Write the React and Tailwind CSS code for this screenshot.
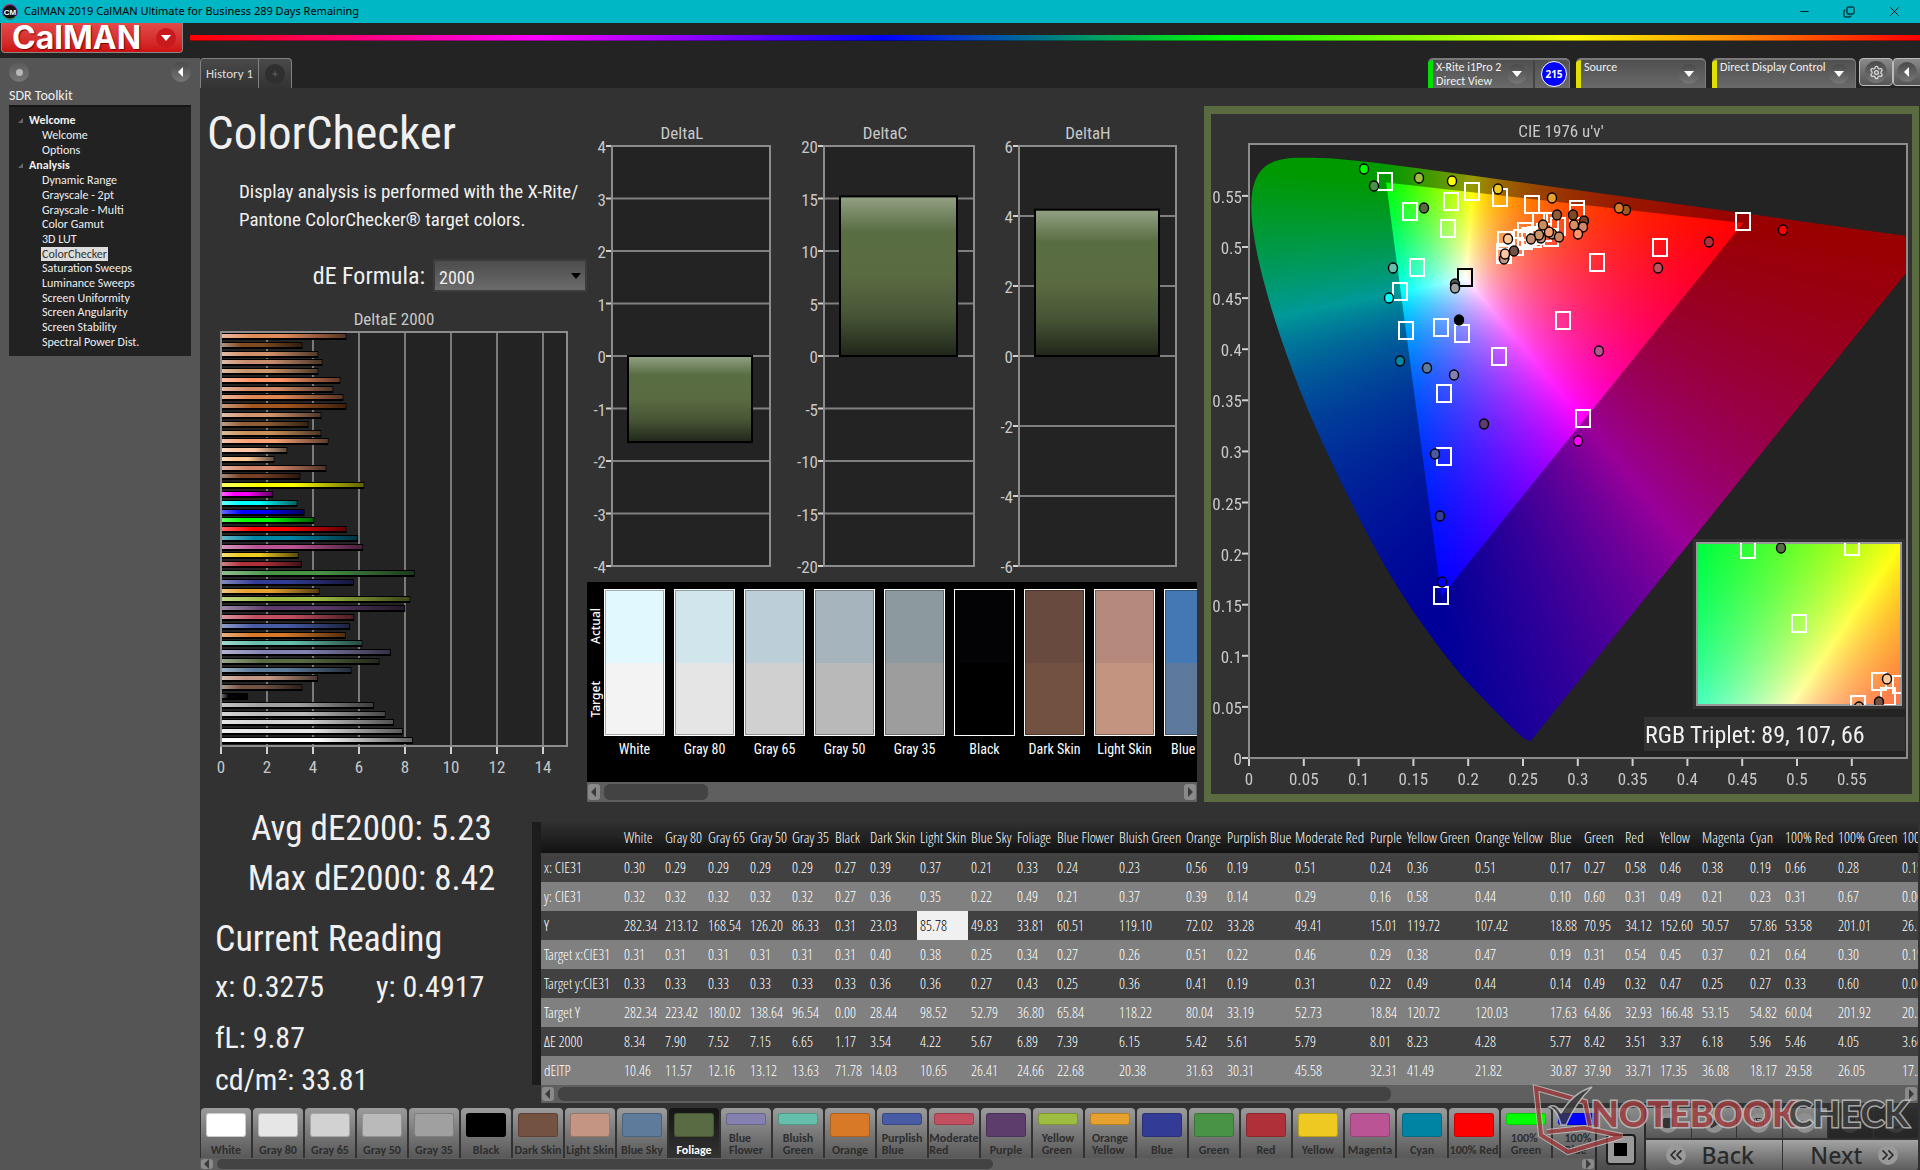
import React, { useEffect, useRef } from 'react';
import { Minus, Copy, X, Settings, ChevronsLeft, ChevronsRight, Square, Play, Save, Infinity as Loop, RefreshCw, Circle, Plus } from 'lucide-react';

const THIN = "font-['Open_Sans_Condensed_Light','Roboto_Condensed',sans-serif]";
const COND = "font-['Roboto_Condensed','Carlito',sans-serif]";
const COND_STACK = "'Roboto Condensed','Carlito',sans-serif";

const tree = [
  { title: 'Welcome', items: ['Welcome', 'Options'] },
  {
    title: 'Analysis',
    items: [
      'Dynamic Range', 'Grayscale - 2pt', 'Grayscale - Multi', 'Color Gamut', '3D LUT', 'ColorChecker',
      'Saturation Sweeps', 'Luminance Sweeps', 'Screen Uniformity', 'Screen Angularity', 'Screen Stability',
      'Spectral Power Dist.',
    ],
  },
];

const deltaE = [
  [5.45, '#e08a57'], [3.54, '#7e4a22'], [4.23, '#cf8f68'], [4.41, '#c68c6c'], [4.23, '#c9946a'], [5.19, '#ff9466'],
  [4.88, '#d38a66'], [5.32, '#e08655'], [5.45, '#a35620'], [4.36, '#d0936e'], [3.8, '#8f5c34'], [4.36, '#c88f5a'],
  [4.67, '#f7a274'], [2.88, '#fcc6a4'], [2.32, '#ffc898'], [4.58, '#d3866a'], [3.45, '#743f24'], [6.23, '#ffff00'],
  [2.27, '#ff00ff'], [3.32, '#00ffff'], [3.63, '#0000ff'], [4.05, '#00ff00'], [5.46, '#ff0000'], [5.96, '#0084a4'],
  [6.18, '#bb5494'], [3.37, '#edc921'], [3.51, '#b03039'], [8.42, '#489446'], [5.77, '#323c96'], [4.28, '#e6a12e'],
  [8.23, '#9dbc40'], [8.01, '#5c3d6c'], [5.79, '#c35060'], [5.61, '#485ba5'], [5.42, '#d87928'], [6.15, '#65bfab'],
  [7.39, '#8480b0'], [6.89, '#596b42'], [5.67, '#5e7b9c'], [4.22, '#c39582'], [3.54, '#745242'], [1.17, '#040404'],
  [6.65, '#a0a0a0'], [7.15, '#bababa'], [7.52, '#d2d2d2'], [7.9, '#e6e6e6'], [8.34, '#ffffff'],
];

const strip = [
  ['White', '#e2f8ff', '#f3f3f3'], ['Gray 80', '#d1e6ec', '#e5e5e5'], ['Gray 65', '#bccfd9', '#d0d0d0'],
  ['Gray 50', '#a6b4be', '#b9b9b9'], ['Gray 35', '#8c999f', '#9d9d9d'], ['Black', '#030305', '#000000'],
  ['Dark Skin', '#684a3e', '#735141'], ['Light Skin', '#b6897d', '#c39480'], ['Blue Sky', '#4378b4', '#5d7a9d'],
];

const columns = [
  ['White', 41, '0.30 0.32 282.34 0.31 0.33 282.34 8.34 10.46'],
  ['Gray 80', 43, '0.29 0.32 213.12 0.31 0.33 223.42 7.90 11.57'],
  ['Gray 65', 42, '0.29 0.32 168.54 0.31 0.33 180.02 7.52 12.16'],
  ['Gray 50', 42, '0.29 0.32 126.20 0.31 0.33 138.64 7.15 13.12'],
  ['Gray 35', 43, '0.29 0.32 86.33 0.31 0.33 96.54 6.65 13.63'],
  ['Black', 35, '0.27 0.27 0.31 0.31 0.33 0.00 1.17 71.78'],
  ['Dark Skin', 50, '0.39 0.36 23.03 0.40 0.36 28.44 3.54 14.03'],
  ['Light Skin', 51, '0.37 0.35 85.78 0.38 0.36 98.52 4.22 10.65'],
  ['Blue Sky', 46, '0.21 0.22 49.83 0.25 0.27 52.79 5.67 26.41'],
  ['Foliage', 40, '0.33 0.49 33.81 0.34 0.43 36.80 6.89 24.66'],
  ['Blue Flower', 62, '0.24 0.21 60.51 0.27 0.25 65.84 7.39 22.68'],
  ['Bluish Green', 67, '0.23 0.37 119.10 0.26 0.36 118.22 6.15 20.38'],
  ['Orange', 41, '0.56 0.39 72.02 0.51 0.41 80.04 5.42 31.63'],
  ['Purplish Blue', 68, '0.19 0.14 33.28 0.22 0.19 33.19 5.61 30.31'],
  ['Moderate Red', 75, '0.51 0.29 49.41 0.46 0.31 52.73 5.79 45.58'],
  ['Purple', 37, '0.24 0.16 15.01 0.29 0.22 18.84 8.01 32.31'],
  ['Yellow Green', 68, '0.36 0.58 119.72 0.38 0.49 120.72 8.23 41.49'],
  ['Orange Yellow', 75, '0.51 0.44 107.42 0.47 0.44 120.03 4.28 21.82'],
  ['Blue', 34, '0.17 0.10 18.88 0.19 0.14 17.63 5.77 30.87'],
  ['Green', 41, '0.27 0.60 70.95 0.31 0.49 64.86 8.42 37.90'],
  ['Red', 35, '0.58 0.31 34.12 0.54 0.32 32.93 3.51 33.71'],
  ['Yellow', 42, '0.46 0.49 152.60 0.45 0.47 166.48 3.37 17.35'],
  ['Magenta', 48, '0.38 0.21 50.57 0.37 0.25 53.15 6.18 36.08'],
  ['Cyan', 35, '0.19 0.23 57.86 0.21 0.27 54.82 5.96 18.17'],
  ['100% Red', 53, '0.66 0.31 53.58 0.64 0.33 60.04 5.46 29.58'],
  ['100% Green', 64, '0.28 0.67 201.01 0.30 0.60 201.92 4.05 26.05'],
  ['100% Blue', 58, '0.15 0.06 26.10 0.15 0.06 20.32 3.60 17.20'],
].map(([name, width, values]) => ({ name, width, values: values.split(' ') }));
const rowNames = ['x: CIE31', 'y: CIE31', 'Y', 'Target x:CIE31', 'Target y:CIE31', 'Target Y', 'ΔE 2000', 'dEITP'];

const patches = [
  ['White', '#ffffff'], ['Gray 80', '#e6e6e6'], ['Gray 65', '#d2d2d2'], ['Gray 50', '#bababa'], ['Gray 35', '#a0a0a0'],
  ['Black', '#000000'], ['Dark Skin', '#745242'], ['Light Skin', '#c39582'], ['Blue Sky', '#5e7b9c'], ['Foliage', '#596b42'],
  ['Blue Flower', '#8480b0', 1], ['Bluish Green', '#65bfab', 1], ['Orange', '#d87928'], ['Purplish Blue', '#485ba5', 1],
  ['Moderate Red', '#c35060', 1], ['Purple', '#5c3d6c'], ['Yellow Green', '#9dbc40', 1], ['Orange Yellow', '#e6a12e', 1],
  ['Blue', '#323c96'], ['Green', '#489446'], ['Red', '#b03039'], ['Yellow', '#edc921'], ['Magenta', '#bb5494'],
  ['Cyan', '#0084a4'], ['100% Red', '#ff0000'], ['100% Green', '#00ff00', 1], ['100% Blue', '#0000ff', 1],
];

/* Marker positions are in plot units: 658 x 614 covers u' and v' from 0 to 0.6. */
const targets = [
  [136, 37], [223, 47], [251, 53], [283, 60], [202, 57], [161, 67], [199, 84], [168, 123], [151, 147], [157, 186],
  [192, 183], [213, 189], [250, 212], [314, 176], [348, 118], [411, 103], [494, 77], [334, 274], [195, 249], [195, 312],
  [328, 65], [328, 69], [309, 82], [291, 77], [302, 77], [276, 87], [256, 96], [255, 108], [272, 94], [276, 96],
  [280, 92], [286, 91], [267, 102], [302, 93], [285, 94], [295, 88], [255, 110], [192, 451],
];
const readings = [
  [115, 25, '#00ff00'], [125, 42, '#489446'], [170, 34, '#9dbc40'], [203, 37, '#ffff00'], [249, 45, '#edc921'],
  [303, 54, '#e6a12e'], [175, 64, '#596b42'], [377, 66, '#a35620'], [370, 64, '#d87928'], [460, 98, '#b03039'],
  [534, 86, '#ff0000'], [409, 124, '#c35060'], [350, 207, '#bb5494'], [329, 297, '#ff00ff'], [235, 280, '#5c3d6c'],
  [186, 310, '#485ba5'], [178, 224, '#5e7b9c'], [205, 231, '#8480b0'], [151, 217, '#0084a4'], [140, 154, '#00ffff'],
  [144, 124, '#65bfab'], [206, 140, '#555555'], [206, 144, '#a0a0a0'], [210, 176, '#000000'], [191, 372, '#323c96'],
  [193, 438, '#0000ff'], [308, 71, '#8f5c34'], [324, 71, '#7e4a22'], [335, 77, '#743f24'], [334, 83, '#d3866a'],
  [325, 81, '#d88e68'], [329, 90, '#ff9466'], [303, 90, '#c68c6c'], [292, 94, '#c39582'], [310, 93, '#c88860'],
  [300, 88, '#f7a274'], [294, 81, '#c88f5a'], [290, 91, '#c9946a'], [282, 95, '#c68c6c'], [259, 95, '#ffc898'],
  [265, 107, '#745242'], [255, 115, '#c39582'], [256, 110, '#fcc6a4'],
];

const locusXY = [
  [0.1741, 0.005], [0.1714, 0.0051], [0.1644, 0.0109], [0.1566, 0.0177], [0.144, 0.0297], [0.1241, 0.0578],
  [0.1096, 0.0868], [0.0913, 0.1327], [0.0687, 0.2007], [0.0454, 0.295], [0.0235, 0.4127], [0.0082, 0.5384],
  [0.0039, 0.6548], [0.0139, 0.7502], [0.0389, 0.812], [0.0743, 0.8338], [0.1142, 0.8262], [0.1547, 0.8059],
  [0.1929, 0.7816], [0.2296, 0.7543], [0.3016, 0.6923], [0.3731, 0.6245], [0.4441, 0.5547], [0.5125, 0.4866],
  [0.5752, 0.4242], [0.627, 0.3725], [0.6658, 0.334], [0.6915, 0.3083], [0.719, 0.2809], [0.7347, 0.2653],
];

function chromaticityRGB(x, y) {
  const X = x / y;
  const Z = (1 - x - y) / y;
  const lin = [
    3.2406 * X - 1.5372 - 0.4986 * Z,
    -0.9689 * X + 1.8758 + 0.0415 * Z,
    0.0557 * X - 0.204 + 1.057 * Z,
  ].map((c) => Math.max(c, 0));
  const max = Math.max(...lin, 1e-6);
  return lin.map((c) => (255 * c) / max);
}

function field(width, height, toXY, level) {
  const canvas = document.createElement('canvas');
  canvas.width = width;
  canvas.height = height;
  const ctx = canvas.getContext('2d');
  const image = ctx.createImageData(width, height);
  for (let j = 0; j < height; j += 1) {
    for (let i = 0; i < width; i += 1) {
      const [x, y] = toXY(i + 0.5, j + 0.5);
      const rgb = chromaticityRGB(x, Math.max(y, 1e-4));
      const k = (j * width + i) * 4;
      image.data[k] = rgb[0] * level;
      image.data[k + 1] = rgb[1] * level;
      image.data[k + 2] = rgb[2] * level;
      image.data[k + 3] = 255;
    }
  }
  ctx.putImageData(image, 0, 0);
  return canvas;
}

const PLOT = { x: 38, y: 30, w: 658, h: 614 };
const INSET = { x: 486, y: 429, w: 204, h: 162 };

function ChromaticityCanvas() {
  const ref = useRef(null);
  useEffect(() => {
    const ctx = ref.current.getContext('2d');
    const px = (u) => PLOT.x + (u / 0.6) * PLOT.w;
    const py = (v) => PLOT.y + PLOT.h - (v / 0.6) * PLOT.h;
    const toXY = (i, j) => {
      const u = (i / PLOT.w) * 0.6;
      const v = 0.6 - (j / PLOT.h) * 0.6;
      const d = 6 * u - 16 * v + 12;
      return [(9 * u) / d, (4 * v) / d];
    };
    ctx.fillStyle = '#323232';
    ctx.fillRect(0, 0, 701, 680);
    ctx.fillStyle = '#232323';
    ctx.fillRect(PLOT.x, PLOT.y, PLOT.w, PLOT.h);

    const locus = locusXY.map(([x, y]) => {
      const d = -2 * x + 12 * y + 3;
      return [px((4 * x) / d), py((9 * y) / d)];
    });
    ctx.save();
    ctx.beginPath();
    ctx.rect(PLOT.x, PLOT.y, PLOT.w, PLOT.h);
    ctx.clip();
    ctx.beginPath();
    ctx.moveTo(locus[0][0], locus[0][1]);
    for (let n = 1; n < locus.length - 1; n += 1) {
      const [ax, ay] = locus[n];
      const [bx, by] = locus[n + 1];
      ctx.quadraticCurveTo(ax, ay, (ax + bx) / 2, (ay + by) / 2);
    }
    ctx.lineTo(...locus[locus.length - 1]);
    ctx.closePath();
    ctx.clip();
    ctx.drawImage(field(PLOT.w, PLOT.h, toXY, 0.6), PLOT.x, PLOT.y);
    ctx.beginPath();
    ctx.moveTo(px(0.4507), py(0.5229));
    ctx.lineTo(px(0.125), py(0.5625));
    ctx.lineTo(px(0.1754), py(0.1579));
    ctx.closePath();
    ctx.clip();
    ctx.drawImage(field(PLOT.w, PLOT.h, toXY, 1), PLOT.x, PLOT.y);
    ctx.restore();

    ctx.fillStyle = '#323232';
    ctx.fillRect(482, 425, 212, 170);
    ctx.fillRect(433, 603, 261, 34);
    const insetXY = (i, j) => [0.34 + (i - INSET.w / 2) / 1400, 0.43 - (j - INSET.h / 2) / 1240];
    ctx.drawImage(field(INSET.w, INSET.h, insetXY, 1), INSET.x, INSET.y);
  }, []);
  return <canvas ref={ref} width={701} height={680} className="block h-auto w-full" />;
}

function Target({ x, y, color = '#ffffff' }) {
  return <rect x={x - 7} y={y - 8} width="14" height="17" fill="none" stroke={color} strokeWidth="2" />;
}
function Reading({ x, y, color }) {
  return <ellipse cx={x} cy={y} rx="4.5" ry="5" fill={color} stroke="#000000" strokeWidth="1.4" />;
}

function CieChart() {
  const ticks = [0, 0.05, 0.1, 0.15, 0.2, 0.25, 0.3, 0.35, 0.4, 0.45, 0.5, 0.55];
  return (
    <section className="relative border-x-[7px] border-y-8 border-[#5a6b42]">
      <ChromaticityCanvas />
      <svg viewBox="0 0 701 680" className="absolute inset-0 h-full w-full" fontFamily={COND_STACK} fontSize="17" fill="#c8c8c8">
        <text x="350" y="23" textAnchor="middle" fontSize="17">CIE 1976 u'v'</text>
        <rect x={PLOT.x} y={PLOT.y} width={PLOT.w} height={PLOT.h} fill="none" stroke="#8c8c8c" strokeWidth="2" />
        {ticks.map((t) => (
          <g key={t}>
            <line x1={PLOT.x + t * 1096} x2={PLOT.x + t * 1096} y1="645" y2="652" stroke="#d0d0d0" strokeWidth="2" />
            <text x={PLOT.x + t * 1096} y="671" textAnchor="middle">{t}</text>
            <line x1="31" x2="37" y1={644 - t * 1022} y2={644 - t * 1022} stroke="#d0d0d0" strokeWidth="2" />
            <text x="31" y={651 - t * 1022} textAnchor="end">{t}</text>
          </g>
        ))}
        <g transform={`translate(${PLOT.x} ${PLOT.y})`}>
          {targets.map(([x, y], n) => <Target key={n} x={x} y={y} />)}
          <Target x={216} y={133} color="#000000" />
          {readings.map(([x, y, c], n) => <Reading key={n} x={x} y={y} color={c} />)}
        </g>
        <clipPath id="inset-clip"><rect x={INSET.x} y={INSET.y} width={INSET.w} height={INSET.h} /></clipPath>
        <rect x={INSET.x} y={INSET.y} width={INSET.w} height={INSET.h} fill="none" stroke="#9a9a9a" strokeWidth="2" />
        <g clipPath="url(#inset-clip)">
          <Target x={537} y={435} />
          <Target x={641} y={432} />
          <Target x={588} y={509} />
          <Target x={668} y={567} />
          <Target x={689} y={570} />
          <Target x={677} y={582} />
          <Target x={647} y={590} />
          <Reading x={570} y={434} color="#596b42" />
          <Reading x={676} y={565} color="#ffc898" />
          <Reading x={668} y={588} color="#745242" />
          <Reading x={648} y={593} color="#c39582" />
        </g>
        <text x="434" y="629" fontSize="24" fill="#f0f0f0">RGB Triplet: 89, 107, 66</text>
      </svg>
    </section>
  );
}

function DeltaChart({ title, titleX, width, left, right, bar, max, step, value }) {
  const scale = 210 / max;
  const ticks = [];
  for (let t = max; t >= -max; t -= step) ticks.push(t);
  const top = value > 0 ? 236 - value * scale : 236;
  return (
    <svg viewBox={`0 0 ${width} 460`} width={width} height="460" fontFamily={COND_STACK} fontSize="17" fill="#c8c8c8">
      <defs>
        <linearGradient id={`v-${title}`} x1="0" y1="0" x2="0" y2="1">
          <stop offset="0" stopColor="#94a285" />
          <stop offset="0.22" stopColor="#596d43" />
          <stop offset="0.5" stopColor="#5a6b42" />
          <stop offset="0.75" stopColor="#465435" />
          <stop offset="1" stopColor="#20261a" />
        </linearGradient>
      </defs>
      <text x={titleX} y="19" textAnchor="middle">{title}</text>
      <rect x={left} y="26" width={right - left} height="419" fill="#232323" />
      {ticks.map((t) => (
        <g key={t}>
          <line x1={left} x2={right} y1={236 - t * scale} y2={236 - t * scale} stroke="#808080" strokeWidth="2" />
          <line x1={left - 6} x2={left} y1={236 - t * scale} y2={236 - t * scale} stroke="#d0d0d0" strokeWidth="2" />
          <text x={left - 6} y={243 - t * scale} textAnchor="end">{t}</text>
        </g>
      ))}
      <rect x={left} y="26" width={right - left} height="420" fill="none" stroke="#8c8c8c" strokeWidth="2" />
      <rect x={bar[0]} y={top} width={bar[1] - bar[0]} height={Math.abs(value) * scale} fill={`url(#v-${title})`} stroke="#000000" strokeWidth="2" />
    </svg>
  );
}

function DeltaEChart() {
  return (
    <svg viewBox="0 0 387 478" width="387" height="478" fontFamily={COND_STACK} fontSize="17" fill="#c8c8c8">
      <defs>
        <linearGradient id="h-shade" x1="0" x2="1" y1="0" y2="0">
          <stop offset="0" stopColor="#ffffff" stopOpacity="0.4" />
          <stop offset="0.25" stopColor="#ffffff" stopOpacity="0" />
          <stop offset="0.5" stopColor="#000000" stopOpacity="0" />
          <stop offset="1" stopColor="#000000" stopOpacity="0.62" />
        </linearGradient>
      </defs>
      <text x="194" y="18" textAnchor="middle">DeltaE 2000</text>
      <rect x="21" y="25" width="346" height="414" fill="#232323" />
      {[0, 2, 4, 6, 8, 10, 12, 14].map((t) => (
        <g key={t}>
          <line x1={21 + t * 23} x2={21 + t * 23} y1="25" y2="438" stroke="#7a7a7a" strokeWidth="2" />
          <line x1={21 + t * 23} x2={21 + t * 23} y1="439" y2="447" stroke="#d0d0d0" strokeWidth="2" />
          <text x={21 + t * 23} y="466" textAnchor="middle">{t}</text>
        </g>
      ))}
      {deltaE.map(([v, c], n) => (
        <g key={n}>
          <rect x="21" y={Math.round(26 + n * 8.78)} width={v * 23} height="7" fill="#000000" />
          <rect x="22" y={Math.round(27 + n * 8.78)} width={v * 23 - 2} height="4" fill={c} />
          <rect x="22" y={Math.round(27 + n * 8.78)} width={v * 23 - 2} height="4" fill="url(#h-shade)" />
        </g>
      ))}
      <rect x="21" y="25" width="346" height="414" fill="none" stroke="#8c8c8c" strokeWidth="2" />
    </svg>
  );
}

function Arrow({ dir = 'down', className = '' }) {
  const d = { down: 'M0 2h10l-5 6z', left: 'M7 0v10L2 5z', right: 'M3 0v10l5-5z' }[dir];
  return <svg viewBox="0 0 10 10" className={`h-[10px] w-[10px] ${className}`} fill="currentColor"><path d={d} /></svg>;
}

function ScrollBar({ label, thumb, className = '' }) {
  return (
    <div className={`flex items-center gap-1 bg-[#5f5f5f] px-px ${className}`} role="group" aria-label={label}>
      <button aria-label="Scroll left" className="flex h-4/5 w-3 items-center justify-center rounded-[3px] bg-[#8a8a8a] text-[#3c3c3c]"><Arrow dir="left" /></button>
      <div className="h-4/5 flex-1"><div className="h-full rounded-[6px] bg-[#434343]" style={{ width: thumb }} /></div>
      <button aria-label="Scroll right" className="flex h-4/5 w-3 items-center justify-center rounded-[3px] bg-[#8a8a8a] text-[#3c3c3c]"><Arrow dir="right" /></button>
    </div>
  );
}

function Knob({ className = '', children }) {
  return <span className={`flex items-center justify-center rounded-full bg-linear-to-b from-[#4a4a4a] to-[#777] text-white ${className}`}>{children}</span>;
}

function DeviceTab({ color, width, lines, children }) {
  return (
    <div className={`flex h-[30px] overflow-hidden rounded-t-[5px] border-t-2 border-r border-[#7a7a7a] bg-linear-to-b from-[#505050] to-[#6a6a6a] ${width}`}>
      <span className={`w-[5px] ${color}`} />
      <span className="flex-1 pl-[3px] text-[12px] leading-[14px] whitespace-nowrap text-[#f0f0f0]">
        {lines.map((l) => <span key={l} className="block">{l}</span>)}
      </span>
      <button aria-label={`${lines[0]} menu`} className="mr-[6px] self-center"><Knob className="h-5 w-5"><Arrow /></Knob></button>
      {children}
    </div>
  );
}

function Sidebar() {
  return (
    <aside className="w-[200px] shrink-0 bg-[#555]">
      <div className="flex items-center justify-between px-[9px] pt-[4px]">
        <Knob className="h-5 w-5 from-[#5a5a5a] to-[#6a6a6a]"><span className="h-[7px] w-[7px] rounded-full bg-[#b8b8b8]" /></Knob>
        <button aria-label="Collapse sidebar"><Knob className="h-5 w-5"><Arrow dir="left" /></Knob></button>
      </div>
      <h2 className="pt-[5px] pl-[9px] text-[14px] leading-[18px] text-[#eee]">SDR Toolkit</h2>
      <nav aria-label="Workflow" className="mx-[9px] h-[251px] border-t-2 border-[#161616] bg-[#222] pt-[5px] text-[12px] leading-[15px] text-[#eee]">
        {tree.map((group) => (
          <div key={group.title}>
            <div className="flex h-[16px] items-center gap-[6px] pl-[9px] font-bold">
              <svg viewBox="0 0 6 6" className="h-[5px] w-[5px]" fill="#666"><path d="M6 0v6H0z" /></svg>
              {group.title}
            </div>
            <ul className={group.items.length > 2 ? 'flex h-[176px] flex-col' : 'flex h-[29px] flex-col'}>
              {group.items.map((item) => (
                <li key={item} className="flex flex-1 items-center pl-[32px]">
                  <a href="#" className={item === 'ColorChecker' ? 'bg-[#ddd] px-px leading-[14px] text-[#333]' : 'px-px leading-[14px]'}>{item}</a>
                </li>
              ))}
            </ul>
          </div>
        ))}
      </nav>
    </aside>
  );
}

function PatchStrip() {
  return (
    <div className="overflow-hidden bg-black">
      <div className="flex h-[200px] overflow-hidden pt-[7px]">
        <div className="flex h-[147px] w-[17px] shrink-0 flex-col items-center justify-around text-[12px] leading-[16px] font-medium text-white font-['Noto_Sans',sans-serif]">
          <span className="rotate-180 [writing-mode:vertical-rl]">Actual</span>
          <span className="rotate-180 [writing-mode:vertical-rl]">Target</span>
        </div>
        <div className="flex gap-[9px]">
          {strip.map(([name, actual, target]) => (
            <figure key={name} className="w-[61px] shrink-0">
              <div className="flex h-[147px] flex-col border border-white">
                <div className="flex-1 border-x border-t border-black/30" style={{ backgroundColor: actual }} />
                <div className="flex-1 border-x border-b border-black/30" style={{ backgroundColor: target }} />
              </div>
              <figcaption className={`pt-[3px] text-center text-[14px] leading-[20px] whitespace-nowrap text-white ${COND}`}>{name}</figcaption>
            </figure>
          ))}
        </div>
      </div>
      <ScrollBar label="Patch strip" thumb="18%" className="h-5" />
    </div>
  );
}

function ReadingsTable() {
  return (
    <div className="flex min-w-0 flex-1 flex-col pt-[20px]">
      <div className="overflow-hidden border-l-[9px] border-[#1c1c1c]">
        <table className={`w-[1416px] table-fixed border-collapse text-left text-[15px] text-white ${THIN}`}>
          <colgroup>
            <col style={{ width: 80 }} />
            {columns.map((c) => <col key={c.name} style={{ width: c.width }} />)}
          </colgroup>
          <thead>
            <tr className="h-[31px] bg-linear-to-b from-[#303030] via-[#222] to-[#111]">
              <td />
              {columns.map((c) => <th key={c.name} scope="col" className="p-0 pl-[3px] font-normal whitespace-nowrap">{c.name}</th>)}
            </tr>
          </thead>
          <tbody>
            {rowNames.map((name, r) => (
              <tr key={name} className="h-[29px] odd:bg-[#414141] even:bg-[#808080]">
                <th scope="row" className="p-0 pl-[3px] font-normal whitespace-nowrap">{name}</th>
                {columns.map((c) => (
                  <td key={c.name} className={c.values[r] === '85.78' ? 'bg-[#f0f0f0] p-0 pl-[3px] text-black' : 'p-0 pl-[3px]'}>{c.values[r]}</td>
                ))}
              </tr>
            ))}
          </tbody>
        </table>
      </div>
      <ScrollBar label="Readings table" thumb="62%" className="ml-[9px] h-[18px]" />
    </div>
  );
}

function Patches() {
  return (
    <div className="flex min-w-0 flex-1 flex-col">
      <div className="flex gap-[2px] overflow-hidden pl-px">
        {patches.map(([name, color, tall]) => (
          <button
            key={name}
            className={`flex h-[50px] w-[50px] shrink-0 flex-col items-center justify-between rounded-t-[4px] pt-[5px] pb-[2px] text-[12px] leading-[12px] ${
              name === 'Foliage' ? 'bg-linear-to-b from-[#151515] to-[#333] font-bold text-white' : 'bg-linear-to-b from-[#9c9c9c] to-[#585858] font-bold text-[#2e2e2e]'
            }`}
          >
            <span className={`w-10 rounded-[3px] border border-black/20 ${tall ? 'h-3' : 'h-6'}`} style={{ backgroundColor: color }} />
            {tall ? <span className="text-left">{name.split(' ')[0]}<br />{name.split(' ')[1]}</span> : <span className="whitespace-nowrap">{name}</span>}
          </button>
        ))}
      </div>
      <ScrollBar label="Patches" thumb="57%" className="h-[12px]" />
    </div>
  );
}

function Controls() {
  const icons = [Square, Play, Save, Loop, RefreshCw, Circle];
  const names = ['Stop', 'Read', 'Read series', 'Continuous', 'Refresh', 'Options'];
  return (
    <>
      <div className="flex w-[51px] shrink-0 flex-col items-center justify-between border-x-2 border-[#2a2a2a] bg-linear-to-b from-[#8a8a8a] to-[#4c4c4c] pt-[3px] pb-[5px]">
        <span className="h-[10px] w-5 rounded-t-full bg-[#707070]" />
        <button aria-label="Pattern window" className="flex h-[31px] w-[30px] items-center justify-center rounded-[4px] border-2 border-[#1c1c1c] bg-[#999]"><span className="h-[13px] w-[13px] bg-black" /></button>
      </div>
      <div className="flex w-[274px] shrink-0 flex-col gap-[2px] pr-[2px]">
        <div className="grid h-[30px] grid-cols-6 gap-px">
          {icons.map((Icon, n) => (
            <button key={names[n]} aria-label={names[n]} className={`flex items-center justify-center bg-linear-to-b ${n > 3 ? 'from-[#2e2e2e] to-[#262626]' : 'from-[#8c8c8c] to-[#565656]'}`}>
              <span className={`flex h-5 w-5 items-center justify-center rounded-full ${n > 3 ? 'bg-[#3a3a3a] text-[#222]' : 'bg-[#8f8f8f] text-[#333]'}`}><Icon size={12} fill={n < 2 ? 'currentColor' : 'none'} /></span>
            </button>
          ))}
        </div>
        <div className="grid flex-1 grid-cols-2 gap-px text-[23px] leading-[26px] font-medium text-[#2a2a2a] font-['Noto_Sans',sans-serif]">
          <button className="flex items-center justify-center gap-[16px] rounded-bl-[3px] bg-linear-to-b from-[#a4a4a4] to-[#5c5c5c] pr-2"><span className="rounded-full bg-[#9a9a9a]"><ChevronsLeft size={20} /></span>Back</button>
          <button className="flex items-center justify-center gap-[16px] rounded-br-[3px] bg-linear-to-b from-[#a4a4a4] to-[#5c5c5c] pl-2">Next<span className="rounded-full bg-[#9a9a9a]"><ChevronsRight size={20} /></span></button>
        </div>
      </div>
    </>
  );
}

function Watermark() {
  return (
    <svg viewBox="0 0 400 95" width="400" height="95" className="pointer-events-none absolute right-0 bottom-0 opacity-80">
      <g fill="none" strokeLinejoin="miter">
        <path d="M70 51 65 27 16 13 21 60 48 77 102 61 64 53 27 57" stroke="#c8c8c8" strokeWidth="6" />
        <path d="M70 51 65 27 16 13 21 60 48 77 102 61 64 53 27 57" stroke="#a33c3e" strokeWidth="4" />
      </g>
      <path d="M29 32q7-4 12 6Q53 18 72 12 56 27 46 50H41Q37 34 29 32z" fill="#3c3c3c" stroke="#c8c8c8" strokeWidth="1.5" />
      <g fontFamily="Lato,sans-serif" fontSize="36" strokeWidth="3" stroke="#c4c4c4" paintOrder="stroke">
        <text x="71" y="52" fontWeight="900" fill="#a33c3e">NOTEBOOK</text>
        <text x="389" y="52" textAnchor="end" fontWeight="700" fill="#3c3c3c">CHECK</text>
      </g>
    </svg>
  );
}

export default function App() {
  return (
    <div className="relative flex min-h-screen w-full flex-col overflow-hidden bg-[#232323] font-['Carlito',sans-serif]">
      <header className="flex h-[23px] items-center bg-[#00b7c6] pl-[2px] text-black">
        <svg viewBox="0 0 16 16" className="h-4 w-4">
          <circle cx="8" cy="8" r="7.4" fill="#111" stroke="#7a2fc0" />
          <path d="M2 12a7.4 7.4 0 0 0 12 0" fill="none" stroke="#2bb34a" />
          <path d="M1 5a7.4 7.4 0 0 1 7-4.4" fill="none" stroke="#d33" />
          <text x="8" y="11" textAnchor="middle" fontSize="8" fontWeight="700" fill="#fff" fontFamily="Liberation Sans,sans-serif">CM</text>
        </svg>
        <h1 className="pl-[6px] text-[11px] font-['Noto_Sans',sans-serif]">CalMAN 2019 CalMAN Ultimate for Business 289 Days Remaining</h1>
        <div className="ml-auto flex items-center gap-[32px] pr-[18px]">
          <button aria-label="Minimize"><Minus size={13} strokeWidth={1.5} /></button>
          <button aria-label="Restore"><Copy size={12} strokeWidth={2} className="-scale-x-100 rotate-180" /></button>
          <button aria-label="Close"><X size={15} strokeWidth={1.5} /></button>
        </div>
      </header>

      <div className="flex h-[35px] items-start">
        <button className="ml-px flex h-[30px] w-[182px] items-center justify-between rounded-b-[4px] border border-t-0 border-[#888] bg-linear-to-b from-[#e24a4a] to-[#cc1010] pr-[6px] pl-[10px] text-white">
          <span className="text-[32px] leading-[28px] font-bold font-['Inter',sans-serif] [text-shadow:1px_1px_1px_#7a0000]">CalMAN</span>
          <span className="flex h-5 w-5 items-center justify-center rounded-full bg-[#c81a1e]"><Arrow /></span>
        </button>
        <div className="mt-[12px] ml-[7px] h-[6px] flex-1 border-b border-black/40 bg-[linear-gradient(to_right,#f00,#f0f,#00f,#0f0,#ff0,#f00)]" />
      </div>

      <div className="flex flex-1">
        <Sidebar />
        <div className="flex min-w-0 flex-1 flex-col">
          <div className="flex h-[30px] items-start">
            <div className="flex h-[30px] rounded-t-[4px] border border-b-0 border-[#808080] bg-linear-to-b from-[#4a4a4a] to-[#333] text-[#ddd]">
              <button className="w-[58px] border-r border-[#808080] text-[13px]">History 1</button>
              <button aria-label="Add tab" className="flex w-[32px] items-center justify-center"><span className="flex h-5 w-5 items-center justify-center rounded-full bg-[#2f2f2f] text-[#777]"><Plus size={8} /></span></button>
            </div>
            <div className="ml-auto flex gap-[6px]">
              <DeviceTab color="bg-[#00e000]" width="w-[142px]" lines={['X-Rite i1Pro 2', 'Direct View']}>
                <span className="flex w-[36px] items-center justify-center border-l-2 border-[#444] pl-[4px]">
                  <span className="flex h-[26px] w-[26px] items-center justify-center rounded-full border border-white bg-[#0000ff] text-[10px] font-bold text-white font-['Noto_Sans',sans-serif]">215</span>
                </span>
              </DeviceTab>
              <DeviceTab color="bg-[#e0e000]" width="w-[130px]" lines={['Source']} />
              <DeviceTab color="bg-[#e0e000]" width="w-[144px]" lines={['Direct Display Control']} />
              <div className="-ml-[3px] flex">
                <button aria-label="Settings" className="flex h-[28px] w-[34px] items-center justify-center rounded-[4px] border border-[#bbb] bg-linear-to-b from-[#8a8a8a] to-[#555]"><Knob className="h-[22px] w-[22px]"><Settings size={15} color="#ddd" /></Knob></button>
                <button aria-label="Collapse panel" className="flex h-[28px] w-[27px] items-center justify-center rounded-l-[4px] border border-r-0 border-[#bbb] bg-linear-to-b from-[#8a8a8a] to-[#555]"><Knob className="h-5 w-5"><Arrow dir="left" /></Knob></button>
              </div>
            </div>
          </div>

          <main className="flex flex-1 flex-col bg-[#323232] text-[#f0f0f0]">
            <div className="grid grid-cols-[387px_610px_1fr]">
              <section className="flex flex-col">
                <h2 className={`pt-[13px] pl-[7px] text-[47px] leading-[64px] ${COND}`}>ColorChecker</h2>
                <p className={`pt-[13px] pl-[39px] text-[19px] leading-[28px] whitespace-nowrap ${COND}`}>Display analysis is performed with the X-Rite/<br />Pantone ColorChecker® target colors.</p>
                <div className="flex items-center justify-end gap-2 pt-[25px]">
                  <label htmlFor="formula" className={`text-[24px] leading-[32px] ${COND}`}>dE Formula:</label>
                  <div className="relative">
                    <select id="formula" defaultValue="2000" className={`h-[33px] w-[154px] appearance-none border-2 border-[#3c3c3c] bg-linear-to-b from-[#4c4c4c] to-[#6c6c6c] pt-[3px] pl-[4px] text-[18px] text-[#eee] ${COND}`}>
                      <option value="2000">2000</option>
                    </select>
                    <Arrow className="pointer-events-none absolute top-[12px] right-[6px] text-black" />
                  </div>
                </div>
                <div className="pt-[15px]"><DeltaEChart /></div>
              </section>
              <section className="flex flex-col pt-[32px]">
                <div className="flex">
                  <DeltaChart title="DeltaL" titleX={95} width={195} left={25} right={183} bar={[41, 165]} max={4} step={1} value={-1.64} />
                  <DeltaChart title="DeltaC" titleX={103} width={200} left={42} right={192} bar={[58, 175]} max={20} step={5} value={15.2} />
                  <DeltaChart title="DeltaH" titleX={106} width={215} left={37} right={194} bar={[53, 177]} max={6} step={2} value={4.18} />
                </div>
                <div className="pt-[2px]"><PatchStrip /></div>
              </section>
              <div className="pt-[18px] pr-px pl-[7px]"><CieChart /></div>
            </div>

            <div className="flex flex-1 pr-[2px]">
              <section className={`w-[332px] shrink-0 pt-[2px] pl-[15px] ${COND}`}>
                <div className="pr-[4px] text-center text-[35px] leading-[50px]">
                  <p>Avg dE2000: 5.23</p>
                  <p>Max dE2000: 8.42</p>
                </div>
                <h3 className="pt-[8px] text-[36px] leading-[54px]">Current Reading</h3>
                <div className="text-[30px] leading-[42px]">
                  <p className="flex"><span className="w-[161px]">x: 0.3275</span><span>y: 0.4917</span></p>
                  <p className="pt-[9px]">fL: 9.87</p>
                  <p>cd/m²: 33.81</p>
                </div>
              </section>
              <ReadingsTable />
            </div>

            <div className="flex h-[63px] pt-px">
              <Patches />
              <Controls />
            </div>
          </main>
        </div>
      </div>
      <Watermark />
    </div>
  );
}
